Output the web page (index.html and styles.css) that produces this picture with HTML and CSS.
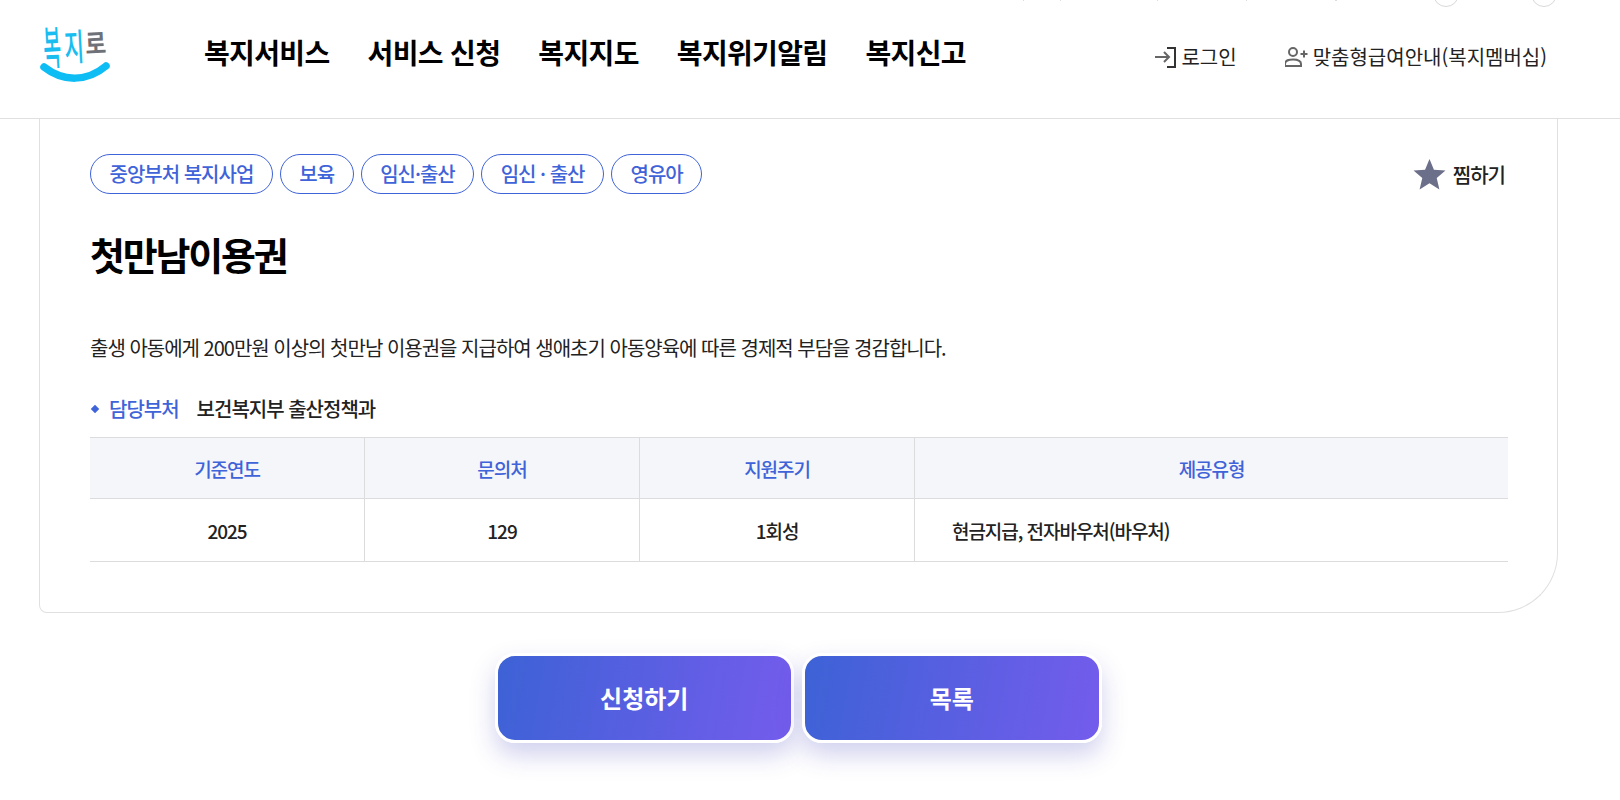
FILE: index.html
```html
<!DOCTYPE html>
<html lang="ko">
<head>
    <meta charset="UTF-8">
    <meta name="viewport" content="width=device-width, initial-scale=1.0">
    <title>첫만남이용권</title>
    <link rel="stylesheet" href="styles.css">
</head>
<body>

<div class="top-bar">
    <span class="top-circle"></span>
    <span class="top-circle"></span>
</div>

<header class="site-header">
    <a class="logo" href="#">
        <span class="logo-text"><span class="logo-a">복</span><span class="logo-b">지</span><span class="logo-c">로</span></span>
        <svg class="logo-smile" width="76" height="24" viewBox="0 0 76 24"><path d="M5 5C24 20 48 20 67 4" fill="none" stroke="#0fbdf5" stroke-width="7.500" stroke-linecap="round"/></svg>
    </a>
    <nav class="gnb">
        <a href="#">복지서비스</a>
        <a href="#">서비스 신청</a>
        <a href="#">복지지도</a>
        <a href="#">복지위기알림</a>
        <a href="#">복지신고</a>
    </nav>
    <div class="util">
        <a href="#">
            <svg width="22" height="22" viewBox="0 0 22 22" fill="none"><path d="M1 11H15M10 6L15 11L10 16" stroke="#666" stroke-width="2"/><path d="M13 2H21V21H13" stroke="#333" stroke-width="2"/></svg>
            로그인
        </a>
        <a href="#">
            <svg width="23" height="22" viewBox="0 0 23 22" fill="none" stroke="#666" stroke-width="2"><circle cx="8" cy="6" r="4"/><path d="M0 20V18C0 15 3 13.500 8 13.500C13 13.500 16 15 16 18V20Z"/><path d="M15.500 8H22.500M19 4.500V11.500"/></svg>
            맞춤형급여안내(복지멤버십)
        </a>
    </div>
</header>

<main class="content">
    <section class="detail-card">
        <div class="tag-row">
            <ul class="tags">
                <li>중앙부처 복지사업</li>
                <li>보육</li>
                <li>임신·출산</li>
                <li>임신 · 출산</li>
                <li>영유아</li>
            </ul>
            <button class="bookmark">
                <svg width="33" height="33" viewBox="0 0 32 32"><path d="M16 1L20.300 11.300L31.500 12.200L23 19.500L25.600 30.500L16 24.600L6.400 30.500L9 19.500L.5 12.200L11.700 11.300Z" fill="#6c6f8a"/></svg>
                찜하기
            </button>
        </div>

        <h1>첫만남이용권</h1>
        <p class="summary">출생 아동에게 200만원 이상의 첫만남 이용권을 지급하여 생애초기 아동양육에 따른 경제적 부담을 경감합니다.</p>

        <div class="dept">
            <span class="dept-label">담당부처</span>
            <span>보건복지부 출산정책과</span>
        </div>

        <table class="info-table">
            <tr>
                <th>기준연도</th>
                <th>문의처</th>
                <th>지원주기</th>
                <th>제공유형</th>
            </tr>
            <tr>
                <td>2025</td>
                <td>129</td>
                <td>1회성</td>
                <td class="left">현금지급, 전자바우처(바우처)</td>
            </tr>
        </table>
    </section>

    <div class="btn-row">
        <a class="btn" href="#">신청하기</a>
        <a class="btn" href="#">목록</a>
    </div>
</main>

</body>
</html>
```

FILE: styles.css
```css
body {
    font-family: "Noto Sans CJK KR", "Noto Sans", sans-serif;
    color: #111;
    background-color: #fff;
    margin: 0;
    padding: 0;
    height: 800px;
    overflow: hidden;
    position: relative;
}

a {
    color: inherit;
    text-decoration: none;
}

/* the page is scrolled, only the bottom of the top bar still shows */
.top-bar {
    position: absolute;
    top: 0;
    left: 0;
    right: 0;
    height: 7px;
    overflow: hidden;
    display: flex;
    justify-content: flex-end;
    gap: 72px;
    padding-right: 63px;
    background:
        linear-gradient(#ddd, #ddd) 1023px 0 / 1px 1px no-repeat,
        linear-gradient(#ddd, #ddd) 1060px 0 / 1px 1px no-repeat,
        linear-gradient(#ddd, #ddd) 1157px 0 / 1px 1px no-repeat,
        linear-gradient(#ddd, #ddd) 1246px 0 / 1px 1px no-repeat,
        linear-gradient(#ddd, #ddd) 1335px 0 / 2px 1px no-repeat;
}

.top-circle {
    flex: none;
    width: 26px;
    height: 26px;
    box-sizing: border-box;
    margin-top: -19px;
    border: 1px solid #d8d8d8;
    border-radius: 50%;
}

.site-header {
    height: 119px;
    box-sizing: border-box;
    border-bottom: 1px solid #e0e0e0;
    display: flex;
    align-items: flex-start;
    padding: 0 73px 0 39px;
}

.logo {
    width: 165px;
    padding-top: 18px;
    display: flex;
    flex-direction: column;
}

.logo-text {
    display: flex;
    height: 46px;
    padding-left: 4px;
    font-weight: 500;
    line-height: 1;
    color: #19bdf0;
    transform: rotate(-3deg);
}

.logo-text span {
    display: block;
    transform-origin: left top;
}

.logo-a {
    width: 21px;
    font-size: 46px;
    transform: scaleX(.42);
}

.logo-b {
    width: 21px;
    margin-top: 6px;
    font-size: 37px;
    transform: scaleX(.58);
}

.logo-c {
    margin-top: 9px;
    font-size: 27px;
    font-weight: 700;
    color: #6f7178;
    transform: scaleX(.84);
}

.logo-smile {
    margin-top: -2px;
}

.gnb {
    display: flex;
    gap: 38px;
    padding-top: 32px;
    font-size: 28px;
    font-weight: 700;
    line-height: 40px;
    color: #000;
    letter-spacing: -.65px;
}

.util {
    margin-left: auto;
    display: flex;
    gap: 48px;
    padding-top: 40px;
    font-size: 20px;
    line-height: 34px;
    color: #222;
}

.util a {
    display: flex;
    align-items: center;
    gap: 5px;
}

.content {
    padding: 0 62px 0 39px;
}

.detail-card {
    box-sizing: border-box;
    height: 494px;
    border: 1px solid #e0e0e0;
    border-top: none;
    border-radius: 0 0 60px 8px;
    padding: 35px 49px 0 50px;
}

.tag-row {
    display: flex;
    justify-content: space-between;
    align-items: center;
}

.tags {
    display: flex;
    gap: 7px;
    list-style: none;
    margin: 0;
    padding: 0;
}

.tags li {
    height: 40px;
    box-sizing: border-box;
    border: 1px solid #3f63d8;
    border-radius: 20px;
    padding: 0 18.500px;
    font-size: 20px;
    font-weight: 500;
    line-height: 37px;
    color: #3f63d8;
    letter-spacing: -1px;
}

.bookmark {
    display: flex;
    align-items: center;
    gap: 7px;
    border: none;
    background: none;
    padding: 0 3px 0 0;
    font: inherit;
    font-size: 20px;
    font-weight: 500;
    color: #222;
    letter-spacing: -1px;
}

h1 {
    margin: 32px 0 0;
    font-size: 38px;
    font-weight: 700;
    line-height: 56px;
    color: #000;
    letter-spacing: -2.200px;
}

.summary {
    margin: 51px 0 0;
    font-size: 20px;
    line-height: 30px;
    letter-spacing: -1px;
    color: #222;
}

.dept {
    margin-top: 31px;
    display: flex;
    gap: 18px;
    font-size: 20px;
    font-weight: 500;
    line-height: 30px;
    color: #222;
    letter-spacing: -1px;
}

.dept-label {
    position: relative;
    padding-left: 19px;
    color: #3f63d8;
}

.dept-label::before {
    content: "";
    position: absolute;
    left: 2px;
    top: 12px;
    width: 6px;
    height: 6px;
    background-color: #3f63d8;
    transform: rotate(45deg);
}

.info-table {
    width: 100%;
    margin-top: 13px;
    border-collapse: collapse;
    table-layout: fixed;
    font-size: 19px;
    letter-spacing: -1.050px;
}

.info-table th, .info-table td {
    border: 1px solid #dcdcdc;
    text-align: center;
}

.info-table th:first-child, .info-table td:first-child {
    border-left: none;
}

.info-table th:last-child, .info-table td:last-child {
    border-right: none;
}

.info-table th:nth-child(-n+3) {
    width: 272px;
}

.info-table th {
    height: 58px;
    background-color: #f5f6fa;
    font-weight: 500;
    color: #3f63d8;
}

.info-table td {
    height: 60px;
    color: #222;
    font-weight: 500;
}

.info-table td.left {
    text-align: left;
    padding-left: 37px;
}

.btn-row {
    display: flex;
    justify-content: center;
    gap: 8px;
    margin-top: 40px;
    padding-right: 1px;
}

.btn {
    width: 299.500px;
    height: 90px;
    box-sizing: border-box;
    border: 3px solid #fff;
    border-radius: 20px;
    background: linear-gradient(100deg, #3d62d6, #745cec);
    box-shadow: 0 12px 24px rgba(70, 70, 190, .25);
    display: flex;
    align-items: center;
    justify-content: center;
    padding-bottom: 2px;
    color: #fff;
    font-size: 24px;
    font-weight: 700;
    letter-spacing: 0;
}
```
